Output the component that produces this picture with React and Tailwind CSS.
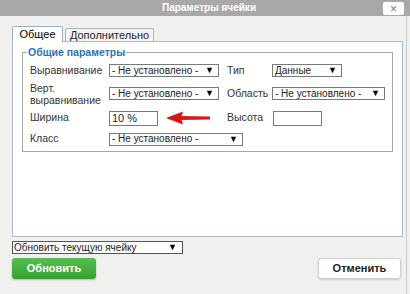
import React from "react";

const font = { fontFamily: '"Liberation Sans", Arial, sans-serif' };

function Select({ text, width }) {
  return (
    <div
      className={`h-[13px] border border-[#7a7a7a] bg-white flex items-center justify-between pl-[2px] pr-[4px] text-[10px] leading-none text-[#222] ${width}`}
    >
      <span className="whitespace-nowrap">{text}</span>
      <span className="text-[9px] text-black">▼</span>
    </div>
  );
}

function Input({ value, width }) {
  return (
    <div
      className={`h-[15px] border border-[#7a7a7a] bg-white flex items-center pl-[2px] text-[11px] leading-none text-[#222] ${width}`}
    >
      {value}
    </div>
  );
}

function Arrow() {
  return (
    <svg width="46" height="14" viewBox="0 0 46 14" className="ml-[8px]">
      <path d="M14 5 L44 5.5 L44 8.5 L14 9 Z" fill="#d41a1a" />
      <path d="M0 7 L17 0.5 L15 7 L17 13.5 Z" fill="#e01010" />
    </svg>
  );
}

export default function App() {
  return (
    <div
      className="w-[410px] h-[294px] bg-[#f0f0ee] overflow-hidden relative"
      style={font}
    >
      {/* title bar */}
      <div className="h-[16px] bg-[#a8a8a8] flex items-center justify-center relative">
        <span className="text-white font-bold text-[10px] leading-none pl-[8px]">
          Параметры ячейки
        </span>
        <div className="absolute right-[6px] top-[2px] w-[21px] h-[13px] bg-white rounded-[2px] flex items-center justify-center text-[#777] text-[12px] leading-none">
          ×
        </div>
      </div>

      <div className="border-r border-[#c8c8c8] h-[278px] mr-[3px] pl-[12px] pr-[3px]">
        {/* tabs */}
        <div className="flex items-end h-[25px] pt-[9px]">
          <div className="h-[16px] w-[51px] bg-white border border-b-0 border-[#98afc6] rounded-t-[2px] flex items-center justify-center text-[11px] text-black relative z-10 top-[1px]">
            Общее
          </div>
          <div className="h-[13px] w-[89px] ml-[2px] bg-[#f4f4f4] border border-b-0 border-[#aab4be] rounded-t-[2px] flex items-center justify-center text-[11px] text-[#222]">
            Дополнительно
          </div>
        </div>

        {/* panel */}
        <div className="h-[196px] bg-white border border-[#a9bccd] px-[9px]">
          <fieldset className="mt-[4px] border border-[#a8a8a8] px-[4px] pb-[4px] w-[371px]">
            <legend className="px-[1px] text-[10.5px] leading-[13px] font-bold text-[#2b72c2]">
              Общие параметры
            </legend>

            <div className="pl-[3px] text-[10.5px] text-[#333]">
              <div className="h-[23px] flex items-center">
                <div className="w-[79px]">Выравнивание</div>
                <div className="w-[118px]">
                  <Select text="- Не установлено -" width="w-[110px]" />
                </div>
                <div className="w-[45px]">Тип</div>
                <Select text="Данные" width="w-[70px]" />
              </div>

              <div className="h-[23px] flex items-center">
                <div className="w-[79px] leading-[12px]">
                  Верт.
                  <br />
                  выравнивание
                </div>
                <div className="w-[118px]">
                  <Select text="- Не установлено -" width="w-[110px]" />
                </div>
                <div className="w-[45px]">Область</div>
                <Select text="- Не установлено -" width="w-[113px]" />
              </div>

              <div className="h-[26px] flex items-center">
                <div className="w-[79px]">Ширина</div>
                <div className="w-[118px] flex items-center">
                  <Input value="10 %" width="w-[49px]" />
                  <Arrow />
                </div>
                <div className="w-[46px]">Высота</div>
                <Input value="" width="w-[49px]" />
              </div>

              <div className="h-[16px] flex items-center">
                <div className="w-[79px]">Класс</div>
                <Select text="- Не установлено -" width="w-[134px]" />
              </div>
            </div>
          </fieldset>
        </div>

        {/* bottom controls */}
        <div className="mt-[4px] h-[13px] w-[171px] border border-[#555] bg-white flex items-center justify-between pl-[1px] pr-[5px] text-[10px] leading-none text-[#222]">
          <span>Обновить текущую ячейку</span>
          <span className="text-[9px] text-black">▼</span>
        </div>

        <div className="mt-[4px] flex justify-between pr-[2px]">
          <button className="h-[21px] w-[84px] rounded-[3px] bg-gradient-to-b from-[#55c04f] to-[#36a231] text-white font-bold text-[11px] shadow-[0_1px_2px_rgba(0,0,0,0.25)]">
            Обновить
          </button>
          <button className="h-[21px] w-[83px] rounded-[3px] bg-white border border-[#d0d0d0] text-[#222] font-bold text-[11px] shadow-[0_1px_2px_rgba(0,0,0,0.15)]">
            Отменить
          </button>
        </div>
      </div>
    </div>
  );
}
